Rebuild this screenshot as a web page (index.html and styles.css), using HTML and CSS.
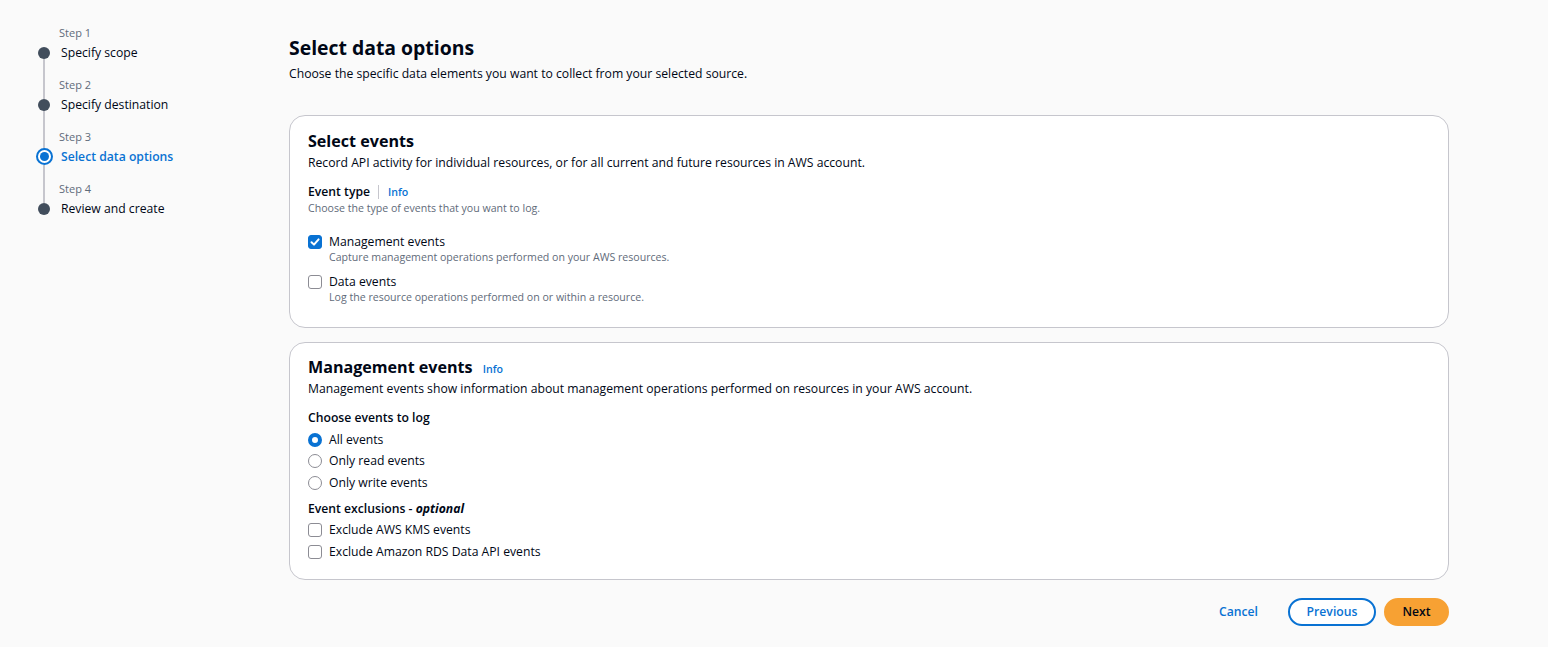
FILE: index.html
```html
<!DOCTYPE html>
<html lang="en">
<head>
<meta charset="utf-8">
<title>Select data options</title>
<link rel="stylesheet" href="styles.css">
</head>
<body>
<div class="page">
  <nav class="steps">
    <div class="step done">
      <span class="step-num">Step 1</span>
      <span class="dot"></span>
      <span class="step-title">Specify scope</span>
    </div>
    <div class="step done">
      <span class="step-num">Step 2</span>
      <span class="dot"></span>
      <span class="step-title">Specify destination</span>
    </div>
    <div class="step active">
      <span class="step-num">Step 3</span>
      <span class="dot"></span>
      <span class="step-title">Select data options</span>
    </div>
    <div class="step last">
      <span class="step-num">Step 4</span>
      <span class="dot"></span>
      <span class="step-title">Review and create</span>
    </div>
  </nav>

  <main class="main">
    <h1 class="page-title">Select data options</h1>
    <p class="page-desc">Choose the specific data elements you want to collect from your selected source.</p>

    <section class="card card-events">
      <h2 class="card-title">Select events</h2>
      <p class="card-desc">Record API activity for individual resources, or for all current and future resources in AWS account.</p>

      <div class="field">
        <div class="field-label">
          <span class="label-text">Event type</span>
          <span class="sep"></span>
          <a class="info">Info</a>
        </div>
        <div class="field-desc">Choose the type of events that you want to log.</div>
      </div>

      <div class="check-list">
        <div class="check-item">
          <span class="box checked">
            <svg viewBox="0 0 14 14" width="14" height="14"><path d="M3.5 7.2 L6 9.6 L10.6 4.4" fill="none" stroke="#fff" stroke-width="2" stroke-linecap="round" stroke-linejoin="round"/></svg>
          </span>
          <div class="check-text">
            <div class="check-label">Management events</div>
            <div class="check-desc">Capture management operations performed on your AWS resources.</div>
          </div>
        </div>
        <div class="check-item">
          <span class="box"></span>
          <div class="check-text">
            <div class="check-label">Data events</div>
            <div class="check-desc">Log the resource operations performed on or within a resource.</div>
          </div>
        </div>
      </div>
    </section>

    <section class="card card-mgmt">
      <h2 class="card-title">Management events <a class="info info-head">Info</a></h2>
      <p class="card-desc">Management events show information about management operations performed on resources in your AWS account.</p>

      <div class="group">
        <div class="group-label">Choose events to log</div>
        <div class="option"><span class="radio checked"></span><span>All events</span></div>
        <div class="option"><span class="radio"></span><span>Only read events</span></div>
        <div class="option"><span class="radio"></span><span>Only write events</span></div>
      </div>

      <div class="group group-excl">
        <div class="group-label">Event exclusions - <em>optional</em></div>
        <div class="option"><span class="box"></span><span>Exclude AWS KMS events</span></div>
        <div class="option"><span class="box"></span><span>Exclude Amazon RDS Data API events</span></div>
      </div>
    </section>

    <div class="actions">
      <button class="btn btn-link">Cancel</button>
      <button class="btn btn-normal">Previous</button>
      <button class="btn btn-primary">Next</button>
    </div>
  </main>
</div>
</body>
</html>
```

FILE: styles.css
```css
* { box-sizing: border-box; }
html, body {
  margin: 0;
  padding: 0;
  background: #fafafa;
  color: #000716;
  font-family: "Open Sans", "Noto Sans", Arial, sans-serif;
  font-size: 12.2px;
}
.page {
  display: flex;
  align-items: flex-start;
  width: 1548px;
  height: 647px;
}

/* Steps navigation */
.steps {
  width: 289px;
  padding: 25px 0 0 34px;
  display: flex;
  flex-direction: column;
}
.step {
  position: relative;
  display: grid;
  grid-template-columns: 20px 1fr;
  grid-template-rows: 17px 21px;
  align-content: start;
  column-gap: 5px;
  height: 52px;
}
.step-num {
  grid-column: 2;
  grid-row: 1;
  font-size: 11px;
  line-height: 16px;
  color: #5f6b7a;
}
.dot {
  position: relative;
  z-index: 1;
  grid-column: 1;
  grid-row: 2;
  align-self: center;
  justify-self: center;
  width: 12px;
  height: 12px;
  border-radius: 50%;
  background: #414d5c;
}
.step-title {
  grid-column: 2;
  grid-row: 2;
  padding: 1px 0 0 2px;
  line-height: 20px;
  color: #000716;
}
.step:not(.last)::after {
  content: "";
  position: absolute;
  left: 9px;
  top: 33px;
  width: 2px;
  height: 41px;
  background: #c6c6cd;
}
.step.active .dot {
  width: 17px;
  height: 17px;
  background: #fff;
  border: 2px solid #0972d3;
  display: flex;
  align-items: center;
  justify-content: center;
}
.step.active .dot::before {
  content: "";
  width: 9px;
  height: 9px;
  border-radius: 50%;
  background: #0972d3;
}
.step.active .step-title {
  color: #0972d3;
  font-weight: 600;
}
.step.active::after { top: 36px; height: 38px; }

/* Main */
.main {
  width: 1160px;
  padding-top: 36px;
  display: flex;
  flex-direction: column;
}
.page-title {
  margin: 0;
  font-size: 19.4px;
  line-height: 24px;
  font-weight: 700;
}
.page-desc {
  margin: 4px 0 0;
  line-height: 20px;
  color: #000716;
}
.card {
  background: #fff;
  border: 1px solid #c6c6cd;
  border-radius: 16px;
  padding: 14px 18px 22px;
}
.card-events { margin-top: 31px; }
.card-mgmt { margin-top: 14px; padding-bottom: 16px; }
.card-title {
  margin: 0;
  font-size: 16.1px;
  line-height: 22px;
  height: 22px;
  font-weight: 700;
}
.card-events .card-desc { margin-top: 1px; }
.card-desc {
  margin: 0;
  line-height: 20px;
}
.info {
  color: #0972d3;
  font-size: 10.6px;
  font-weight: 600;
  line-height: 16px;
  text-decoration: none;
}
.info-head { margin-left: 6px; line-height: 1; vertical-align: baseline; }
.card-mgmt .card-title { margin-top: -1px; height: 23px; }

.field { margin-top: 10px; }
.field-label {
  display: flex;
  align-items: center;
  line-height: 18px;
}
.label-text { font-weight: 600; }
.sep {
  width: 1px;
  height: 14px;
  background: #c6c6cd;
  margin: 0 9px 0 8px;
}
.field-desc {
  margin-top: -1px;
  font-size: 10.6px;
  line-height: 16px;
  color: #5f6b7a;
}

.check-list {
  margin-top: 15px;
  display: flex;
  flex-direction: column;
  gap: 6px;
}
.check-item {
  display: flex;
  align-items: flex-start;
  gap: 7px;
}
.check-item .box { margin-top: 4px; }
.check-label { line-height: 18px; margin-top: 2px; }
.check-desc {
  margin-top: -2px;
  font-size: 10.6px;
  line-height: 16px;
  color: #5f6b7a;
}

.box {
  flex: none;
  width: 14px;
  height: 14px;
  border: 1.5px solid #8c8c94;
  border-radius: 3px;
  background: #fff;
  display: flex;
}
.box.checked {
  background: #0972d3;
  border-color: #0972d3;
}
.box.checked svg { margin: -1.5px; }

.radio {
  flex: none;
  width: 14px;
  height: 14px;
  border-radius: 50%;
  border: 1.5px solid #8c8c94;
  background: #fff;
}
.radio.checked {
  border: 4px solid #0972d3;
}

.group { margin-top: 9px; }
.group-label {
  font-weight: 600;
  line-height: 20px;
  margin-bottom: 1px;
}
.group-label em { font-style: italic; font-weight: 700; }
.option {
  display: flex;
  align-items: center;
  gap: 7px;
  line-height: 20px;
  height: 21.5px;
}
.group-excl { margin-top: 5px; }

/* Actions */
.actions {
  margin-top: 18px;
  display: flex;
  justify-content: flex-end;
  gap: 8px;
}
.btn {
  font-family: inherit;
  font-size: 12.2px;
  font-weight: 600;
  height: 28px;
  border-radius: 20px;
  padding: 0 20px;
  cursor: pointer;
  line-height: 24px;
}
.btn-link {
  background: transparent;
  border: 2px solid transparent;
  color: #0972d3;
}
.btn-normal {
  background: #fff;
  border: 2px solid #0972d3;
  color: #0972d3;
  width: 88px;
  padding: 0;
}
.btn-primary {
  background: #f7a133;
  border: 2px solid #f7a133;
  color: #000716;
  width: 65px;
  padding: 0;
}
```
